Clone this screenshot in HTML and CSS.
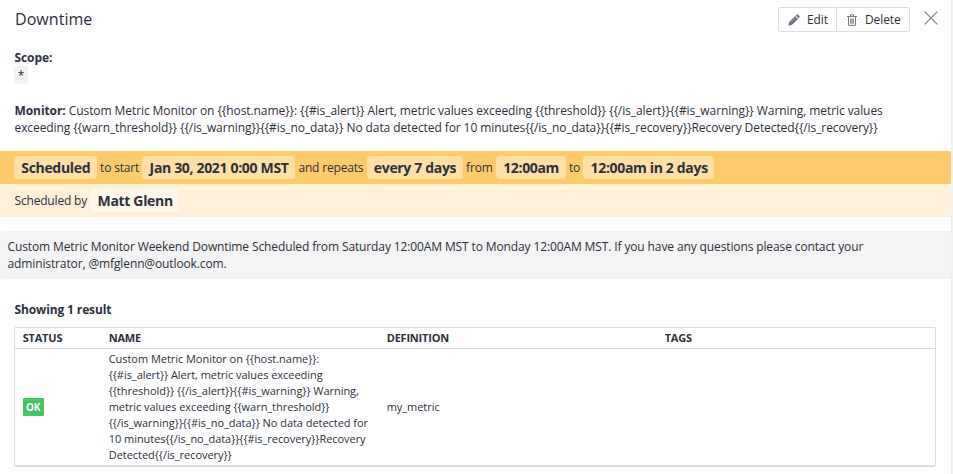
FILE: index.html
```html
<!DOCTYPE html>
<html lang="en">
<head>
<meta charset="utf-8">
<title>Downtime</title>
<link rel="stylesheet" href="styles.css">
</head>
<body>
<main class="panel">
  <header class="header">
    <h1>Downtime</h1>
    <div class="actions">
      <button class="btn edit"><svg width="12" height="12" viewBox="0 0 12 12"><path d="M.3 11.700l.9-3.700L7.100 2.100l2.800 2.800L4 10.800zM7.800 1.400l.9-.9q.5-.5 1 0l1.800 1.800q.5.5 0 1l-.9.9z" fill="#6a717b"/><path d="M2.600 8.600l5-5" stroke="#c4c7cc" stroke-width=".7"/></svg>Edit</button>
      <button class="btn delete"><svg width="10" height="12" viewBox="0 0 10 12"><path d="M0 2.500h10M3.500 2.500V.8h3v1.700M1.500 3v8.300h7V3M3.700 4.500v5.300M5 4.500v5.300M6.300 4.500v5.300" fill="none" stroke="#757b85"/></svg>Delete</button>
    </div>
    <svg class="close" width="14" height="14" viewBox="0 0 14 14"><path d="M.7.7l12.600 12.600M13.300.7L.7 13.300" fill="none" stroke="#7c8087" stroke-width="1.200"/></svg>
  </header>
  <section class="scope"><b>Scope:</b><div><span class="star">*</span></div></section>
  <section class="monitor"><b>Monitor:</b> Custom Metric Monitor on {{host.name}}: {{#is_alert}} Alert, metric values exceeding {{threshold}} {{/is_alert}}{{#is_warning}} Warning, metric values<br>exceeding {{warn_threshold}} {{/is_warning}}{{#is_no_data}} No data detected for 10 minutes{{/is_no_data}}{{#is_recovery}}Recovery Detected{{/is_recovery}}</section>
  <section class="bar schedule"><b>Scheduled</b><span>to start</span><b>Jan 30, 2021 0:00 MST</b><span>and repeats</span><b>every 7 days</b><span>from</span><b>12:00am</b><span>to</span><b>12:00am in 2 days</b></section>
  <section class="bar author"><span>Scheduled by</span><b>Matt Glenn</b></section>
  <section class="message">Custom Metric Monitor Weekend Downtime Scheduled from Saturday 12:00AM MST to Monday 12:00AM MST. If you have any questions please contact your<br>administrator, @mfglenn@outlook.com.</section>
  <h2>Showing 1 result</h2>
  <div class="results">
    <div class="row head"><span>STATUS</span><span>NAME</span><span>DEFINITION</span><span>TAGS</span></div>
    <div class="row item"><span><i class="ok">OK</i></span><span>Custom Metric Monitor on {{host.name}}:<br>{{#is_alert}} Alert, metric values exceeding<br>{{threshold}} {{/is_alert}}{{#is_warning}} Warning,<br>metric values exceeding {{warn_threshold}}<br>{{/is_warning}}{{#is_no_data}} No data detected for<br>10 minutes{{/is_no_data}}{{#is_recovery}}Recovery<br>Detected{{/is_recovery}}</span><span>my_metric</span><span></span></div>
  </div>
</main>
</body>
</html>
```
FILE: styles.css
```css
* { box-sizing: border-box; }
body { margin: 0; background: #fff; color: #2b303b; font: 12px/17px "Open Sans", sans-serif; white-space: nowrap; }
.panel { width: 953px; height: 474px; overflow: hidden; border-right: 2px solid #f0f0f1; }
.header { display: flex; align-items: flex-start; height: 49px; padding: 7px 13px 0 15px; }
h1 { margin: 0; font-size: 16px; line-height: 24px; font-weight: 400; flex: 1; letter-spacing: .05px; }
.actions { display: flex; }
.btn { display: flex; align-items: center; height: 25px; padding: 0 0 0 9px; background: #fff; border: 1px solid #dcdee2; font: 12px "Open Sans", sans-serif; color: #2b303b; }
.edit { width: 59px; gap: 7px; border-radius: 2px 0 0 2px; letter-spacing: -.1px; }
.delete { width: 74px; gap: 8px; padding-left: 10px; margin-left: -1px; border-radius: 0 2px 2px 0; letter-spacing: -.1px; }
.close { margin: 4px 0 0 14px; }
.scope { height: 53px; padding-left: 14.500px; letter-spacing: -.1px; }
.star { display: inline-block; background: #f3f3f3; height: 18px; line-height: 20px; width: 14px; margin-left: -.5px; text-align: center; border-radius: 2px; }
.monitor { height: 49px; padding-left: 14.500px; letter-spacing: -.09px; }
.monitor::first-line { letter-spacing: -.077px; }
.bar { display: flex; align-items: center; gap: 3.200px; height: 33px; padding: 0 0 1px 14px; }
.bar span { padding-top: 1px; letter-spacing: -.18px; }
.bar b { font-size: 14px; line-height: 23px; padding: 0 6.700px 0 7.300px; border-radius: 4px; letter-spacing: -.33px; }
.schedule { background: #ffca6b; }
.schedule b { background: #ffdfa6; }
.author { background: #fff0da; padding-left: 14.500px; }
.author b { background: #fff7ec; }
.message { height: 48px; margin-top: 14px; padding: 7px 7.500px; background: #f4f4f4; border-radius: 3px 0 0 3px; letter-spacing: -.12px; }
h2 { margin: 22px 0 9px 14.500px; font-size: 12px; line-height: 17px; letter-spacing: -.13px; }
.results { width: 922px; height: 140px; margin-left: 14px; border: 1px solid #dcdde1; border-bottom-width: 2px; border-radius: 2px; font-size: 11px; letter-spacing: -.04px; }
.row { display: grid; grid-template-columns: 86px 278px 278px 1fr; align-items: center; padding-left: 7.700px; }
.head { height: 21px; border-bottom: 1px solid #dcdde1; font-weight: 700; letter-spacing: -.2px; line-height: 16px; padding-bottom: 1px; }
.item { line-height: 16px; height: 116px; }
.ok { display: inline-block; background: #41c464; color: #fff; font: 700 10px/18px "Open Sans", sans-serif; width: 21px; text-align: center; border-radius: 1px; vertical-align: middle; }
```
